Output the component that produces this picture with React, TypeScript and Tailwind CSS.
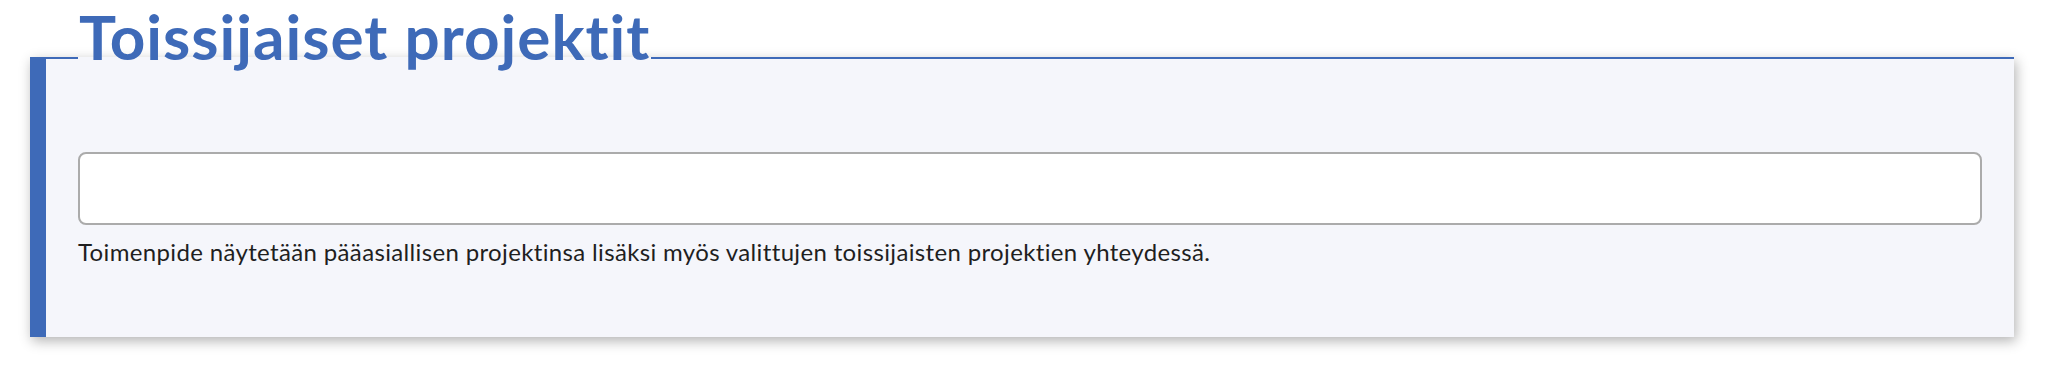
import { useState } from "react";

export default function App() {
  const [value, setValue] = useState("");

  return (
    <main className="min-h-[366px] w-full bg-white pt-[5px] font-['Lato','Liberation_Sans',sans-serif] [font-variant-ligatures:none]">
      <fieldset className="ml-[30px] w-[1984px] border-0 border-t-2 border-l-[16px] border-solid border-[#3e6ab8] bg-[#f5f6fb] pt-[42px] pr-[32px] pb-[67px] pl-[32px] shadow-[2px_4px_12px_rgba(0,0,0,0.3)]">
        <legend className="m-0 px-[1px] pt-0 pb-[43px] text-[62px] leading-none font-bold tracking-[1px] text-[#3e6ab8]">
          Toissijaiset projektit
        </legend>

        <input
          type="text"
          aria-label="Toissijaiset projektit"
          value={value}
          onChange={e => setValue(e.target.value)}
          className="block h-[73px] w-full rounded-[8px] border-2 border-[#ababab] bg-white px-4 text-[24px] outline-none"
        />

        <p className="mt-[9px] text-[24px] leading-normal tracking-[0.35px] text-[#1f1f1f]">
          Toimenpide näytetään pääasiallisen projektinsa lisäksi myös valittujen toissijaisten
          projektien yhteydessä.
        </p>
      </fieldset>
    </main>
  );
}
